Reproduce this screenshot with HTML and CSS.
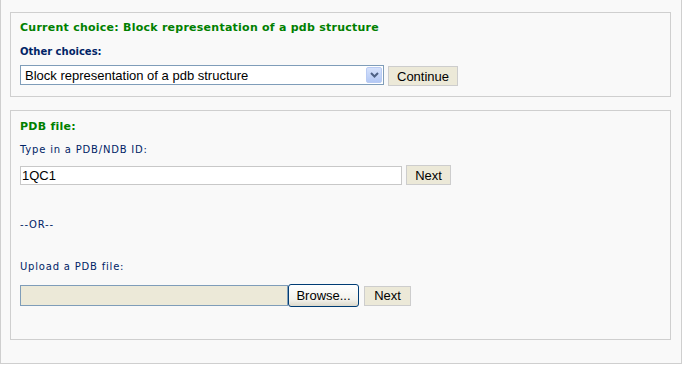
FILE: index.html
```html
<!DOCTYPE html>
<html lang="en">
<head>
    <meta charset="UTF-8">
    <title>Block representation</title>
    <link rel="stylesheet" href="styles.css">
</head>
<body>
    <div class="page">
        <div class="box box-choice">
            <h2 class="title">Current choice: Block representation of a pdb structure</h2>
            <p class="label bold">Other choices:</p>
            <div class="row row-select">
                <div class="select">
                    <span class="select-text">Block representation of a pdb structure</span>
                    <span class="select-arrow">
                        <svg width="9" height="6" viewBox="0 0 9 6"><path d="M1 1 L4.5 4.5 L8 1" fill="none" stroke="#4d6185" stroke-width="2"/></svg>
                    </span>
                </div>
                <button class="btn">Continue</button>
            </div>
        </div>

        <div class="box box-file">
            <h2 class="title">PDB file:</h2>
            <p class="label label-id">Type in a PDB/NDB ID:</p>
            <div class="row row-id">
                <input type="text" class="text-input" value="1QC1">
                <button class="btn btn-next">Next</button>
            </div>
            <p class="label label-or">--OR--</p>
            <p class="label label-upload">Upload a PDB file:</p>
            <div class="row row-upload">
                <div class="file-box"></div>
                <button class="btn-browse">Browse...</button>
                <button class="btn btn-next2">Next</button>
            </div>
        </div>
    </div>
</body>
</html>
```

FILE: styles.css
```css
*{
    margin: 0;
    padding: 0;
    box-sizing: border-box;
}
body{
    background: #fff;
    font-family: "DejaVu Sans", Verdana, sans-serif;
}
.page{
    width: 682px;
    height: 364px;
    background: #f9f9f9;
    border: 1px solid #cfcfcf;
    border-top: none;
    padding: 12px 10px 0 9px;
}
.box{
    border: 1px solid #cfcfcf;
    background: #f9f9f9;
    padding: 8px 9px 0;
}
.box-choice{
    height: 85px;
}
.box-file{
    height: 230px;
    margin-top: 13px;
    padding-top: 9px;
}
.title{
    font-size: 11px;
    line-height: 14px;
    font-weight: bold;
    color: #008000;
    letter-spacing: 0.25px;
}
.label{
    font-size: 10px;
    line-height: 13px;
    color: #002466;
    letter-spacing: 0.8px;
}
.bold{
    font-weight: bold;
    letter-spacing: 0;
    margin-top: 10px;
}
.row{
    display: flex;
    align-items: center;
}
.row-select{
    margin-top: 7px;
    align-items: flex-start;
}
.select{
    display: flex;
    align-items: center;
    width: 364px;
    height: 20px;
    background: #fff;
    border: 1px solid #7f9db9;
    padding: 1px;
}
.select-text{
    flex: auto;
    font-family: "Liberation Sans", Arial, sans-serif;
    font-size: 13px;
    padding-left: 3px;
    color: #000;
}
.select-arrow{
    width: 16px;
    height: 16px;
    display: flex;
    align-items: center;
    justify-content: center;
    background: linear-gradient(#d6e2fc, #b3c8f5);
    border: 1px solid #b9cbf3;
    border-radius: 2px;
}
.btn{
    font-family: "Liberation Sans", Arial, sans-serif;
    font-size: 13px;
    color: #000;
    background: #ece9d8;
    border: 1px solid #cdcdcd;
    height: 20px;
    padding: 0 8px;
    margin-left: 4px;
    margin-top: 1px;
}
.row-select .btn{
    width: 70px;
}
.label-id{
    margin-top: 9px;
}
.row-id{
    margin-top: 9px;
    align-items: flex-start;
}
.text-input{
    width: 382px;
    height: 19px;
    margin-top: 1px;
    border: 1px solid #c8c8c8;
    background: #fff;
    font-family: "Liberation Sans", Arial, sans-serif;
    font-size: 13px;
    padding: 0 1px;
    outline: none;
}
.btn-next{
    width: 45px;
    margin-left: 4px;
    margin-top: 0;
    padding: 0;
}
.label-or{
    margin-top: 33px;
}
.label-upload{
    margin-top: 29px;
}
.row-upload{
    margin-top: 11px;
}
.file-box{
    width: 268px;
    height: 21px;
    background: #ece9d8;
    border: 1px solid #7f9db9;
}
.btn-browse{
    font-family: "Liberation Sans", Arial, sans-serif;
    font-size: 13px;
    color: #000;
    width: 71px;
    height: 23px;
    border: 1px solid #003c74;
    border-radius: 3px;
    background: linear-gradient(#ffffff, #f3f2ec 70%, #dcd9cc);
}
.btn-next2{
    width: 47px;
    margin-left: 5px;
    margin-top: 0;
    padding: 0;
}
```
